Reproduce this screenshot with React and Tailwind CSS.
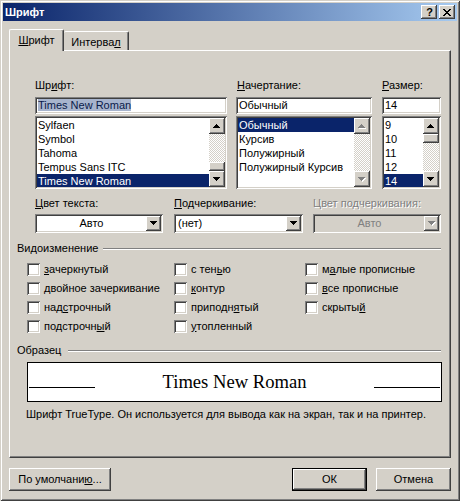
import React from "react";

const raised =
  "shadow-[inset_-1px_-1px_0_#404040,inset_1px_1px_0_#ffffff,inset_-2px_-2px_0_#808080,inset_2px_2px_0_#d4d0c8]";
const sunken =
  "shadow-[inset_1px_1px_0_#808080,inset_-1px_-1px_0_#ffffff,inset_2px_2px_0_#404040,inset_-2px_-2px_0_#d4d0c8]";

function UpArrow({ disabled }) {
  return (
    <svg width="8" height="5" viewBox="0 0 8 5" shapeRendering="crispEdges">
      {disabled && (
        <path d="M4 1h1v1H4z M3 2h3v1H3z M2 3h5v1H2z M1 4h7v1H1z" fill="#ffffff" />
      )}
      <path
        d="M3 0h1v1H3z M2 1h3v1H2z M1 2h5v1H1z M0 3h7v1H0z"
        fill={disabled ? "#808080" : "#000000"}
      />
    </svg>
  );
}

function DownArrow({ disabled }) {
  return (
    <svg width="8" height="5" viewBox="0 0 8 5" shapeRendering="crispEdges">
      {disabled && (
        <path d="M1 1h7v1H1z M2 2h5v1H2z M3 3h3v1H3z M4 4h1v1H4z" fill="#ffffff" />
      )}
      <path
        d="M0 0h7v1H0z M1 1h5v1H1z M2 2h3v1H2z M3 3h1v1H3z"
        fill={disabled ? "#808080" : "#000000"}
      />
    </svg>
  );
}

function Scrollbar({ thumb, disabled }) {
  return (
    <div className="flex flex-col w-[16px] h-full shrink-0">
      <div className={`h-[16px] bg-[#d4d0c8] ${raised} flex items-center justify-center`}>
        <UpArrow disabled={disabled} />
      </div>
      <div
        className={`flex-1 flex flex-col bg-[image:repeating-conic-gradient(#d4d0c8_0%_25%,#ffffff_0%_50%)] bg-[length:2px_2px] ${
          thumb === "bottom" ? "justify-end" : "justify-start"
        }`}
      >
        {thumb && <div className={`h-[9px] bg-[#d4d0c8] ${raised}`} />}
      </div>
      <div className={`h-[16px] bg-[#d4d0c8] ${raised} flex items-center justify-center`}>
        <DownArrow disabled={disabled} />
      </div>
    </div>
  );
}

function ListBox({ items, selected, thumb, disabled }) {
  return (
    <div className={`${sunken} bg-white p-[2px] h-[73px] flex`}>
      <div className="flex-1 flex flex-col overflow-hidden">
        {items.map((it) => (
          <div
            key={it}
            className={`h-[14px] shrink-0 leading-[14px] pl-[1px] whitespace-nowrap ${
              it === selected ? "bg-[#0a246a] text-white" : ""
            }`}
          >
            {it}
          </div>
        ))}
      </div>
      <Scrollbar thumb={thumb} disabled={disabled} />
    </div>
  );
}

function TextBox({ children }) {
  return (
    <div className={`${sunken} bg-white p-[2px] h-[17px] flex items-center`}>
      <div className="pl-[1px] leading-[13px] whitespace-nowrap">{children}</div>
    </div>
  );
}

function Combo({ value, center, disabled }) {
  return (
    <div
      className={`${sunken} ${disabled ? "bg-[#d4d0c8]" : "bg-white"} p-[2px] h-[19px] flex`}
    >
      <div
        className={`flex-1 leading-[15px] whitespace-nowrap ${
          center ? "text-center" : "pl-[2px]"
        } ${disabled ? "text-[#808080]" : ""}`}
      >
        {value}
      </div>
      <div className={`w-[15px] h-[15px] bg-[#d4d0c8] ${raised} flex items-center justify-center`}>
        <DownArrow disabled={disabled} />
      </div>
    </div>
  );
}

function Check({ children }) {
  return (
    <div className="flex items-center h-[19px] gap-[4px] whitespace-nowrap">
      <div className={`w-[13px] h-[13px] bg-white ${sunken} shrink-0`} />
      <span className="leading-[13px]">{children}</span>
    </div>
  );
}

function GroupHeader({ label, gap }) {
  return (
    <div className={`flex items-center h-[13px] ${gap}`}>
      <span className="leading-[13px] whitespace-nowrap">{label}</span>
      <div className="flex-1 h-[2px] border-t border-t-[#808080] border-b border-b-white" />
    </div>
  );
}

function Button({ children, width, isDefault }) {
  return (
    <div
      className={`${width} h-[23px] bg-[#d4d0c8] flex items-center justify-center leading-[13px] ${
        isDefault ? "border border-black" : ""
      } ${raised}`}
    >
      {children}
    </div>
  );
}

export default function App() {
  return (
    <div className="w-[460px] h-[501px] bg-[#d4d0c8] p-[3px] flex flex-col font-['Liberation_Sans',Arial,sans-serif] text-[11px] text-black shadow-[inset_1px_1px_0_#d4d0c8,inset_-1px_-1px_0_#404040,inset_2px_2px_0_#ffffff,inset_-2px_-2px_0_#808080] select-none">
      {/* Title bar */}
      <div className="h-[18px] flex items-center bg-[linear-gradient(to_right,#0a246a,#a6caf0)] pl-[2px] pr-[2px]">
        <span className="flex-1 text-white font-bold leading-[13px]">Шрифт</span>
        <div className="flex gap-[2px]">
          <div className={`w-[16px] h-[14px] bg-[#d4d0c8] ${raised} flex items-center justify-center`}>
            <span className="font-bold text-[11px] leading-[11px] pl-[1px]">?</span>
          </div>
          <div className={`w-[16px] h-[14px] bg-[#d4d0c8] ${raised} flex items-center justify-center`}>
            <svg width="8" height="7" viewBox="0 0 8 7" shapeRendering="crispEdges">
              <path
                d="M0 0h2v1H0z M6 0h2v1H6z M1 1h2v1H1z M5 1h2v1H5z M2 2h4v1H2z M3 3h2v1H3z M2 4h4v1H2z M1 5h2v1H1z M5 5h2v1H5z M0 6h2v1H0z M6 6h2v1H6z"
                fill="#000"
              />
            </svg>
          </div>
        </div>
      </div>

      {/* Tabs */}
      <div className="flex items-end pl-[6px] pt-[8px]">
        <div className="relative z-10 -mb-px w-[55px] h-[22px] bg-[#d4d0c8] border-l border-t border-white border-r border-r-[#404040] rounded-t-[2px] shadow-[inset_-1px_0_0_#808080] flex justify-center pt-[4px] leading-[13px]">
          <span>
            <u>Ш</u>рифт
          </span>
        </div>
        <div className="w-[65px] h-[19px] bg-[#d4d0c8] border-t border-white border-r border-r-[#404040] rounded-t-[2px] shadow-[inset_-1px_0_0_#808080] flex justify-center pt-[4px] leading-[13px]">
          <span>
            Интерва<u>л</u>
          </span>
        </div>
      </div>

      {/* Panel */}
      <div className="mx-[6px] h-[408px] border border-t-white border-l-white border-r-[#404040] border-b-[#404040] shadow-[inset_-1px_-1px_0_#808080] flex flex-col">
        {/* Row 1 */}
        <div className="flex pt-[28px] pl-[25px]">
          <div className="w-[192px] flex flex-col">
            <div className="h-[13px] leading-[13px]">
              Шр<u>и</u>фт:
            </div>
            <div className="mt-[5px]">
              <TextBox>
                <span className="bg-[#a7b4cd] text-[#0a1a4a]">Times New Roman</span>
              </TextBox>
            </div>
            <div className="mt-[2px]">
              <ListBox
                items={["Sylfaen", "Symbol", "Tahoma", "Tempus Sans ITC", "Times New Roman"]}
                selected="Times New Roman"
                thumb="bottom"
              />
            </div>
          </div>
          <div className="w-[136px] ml-[9px] flex flex-col">
            <div className="h-[13px] leading-[13px] pl-[1px]">
              <u>Н</u>ачертание:
            </div>
            <div className="mt-[5px]">
              <TextBox>Обычный</TextBox>
            </div>
            <div className="mt-[2px]">
              <ListBox
                items={["Обычный", "Курсив", "Полужирный", "Полужирный Курсив"]}
                selected="Обычный"
                disabled
              />
            </div>
          </div>
          <div className="w-[59px] ml-[10px] flex flex-col">
            <div className="h-[13px] leading-[13px]">
              <u>Р</u>азмер:
            </div>
            <div className="mt-[5px]">
              <TextBox>14</TextBox>
            </div>
            <div className="mt-[2px]">
              <ListBox items={["9", "10", "11", "12", "14"]} selected="14" thumb="top" />
            </div>
          </div>
        </div>

        {/* Row 2 */}
        <div className="flex mt-[8px] pl-[25px]">
          <div className="w-[128px] flex flex-col">
            <div className="h-[13px] leading-[13px]">
              <u>Ц</u>вет текста:
            </div>
            <div className="mt-[4px]">
              <Combo value="Авто" center />
            </div>
          </div>
          <div className="w-[129px] ml-[11px] flex flex-col">
            <div className="h-[13px] leading-[13px]">
              <u>П</u>одчеркивание:
            </div>
            <div className="mt-[4px]">
              <Combo value="(нет)" />
            </div>
          </div>
          <div className="w-[128px] ml-[10px] flex flex-col">
            <div className="h-[13px] leading-[13px] text-[#808080] [text-shadow:1px_1px_0_#ffffff]">
              Цвет подчеркивания:
            </div>
            <div className="mt-[4px]">
              <Combo value="Авто" center disabled />
            </div>
          </div>
        </div>

        {/* Видоизменение */}
        <div className="mt-[9px] ml-[7px] mr-[9px] flex flex-col">
          <GroupHeader label="Видоизменение" gap="gap-[5px]" />
          <div className="flex mt-[5px] pl-[10px]">
            <div className="w-[147px] flex flex-col">
              <Check>
                <u>з</u>ачеркнутый
              </Check>
              <Check>
                <u>д</u>войное зачеркивание
              </Check>
              <Check>
                над<u>с</u>трочный
              </Check>
              <Check>
                подстрочн<u>ы</u>й
              </Check>
            </div>
            <div className="w-[131px] flex flex-col">
              <Check>
                с тен<u>ь</u>ю
              </Check>
              <Check>
                <u>к</u>онтур
              </Check>
              <Check>
                приподн<u>я</u>тый
              </Check>
              <Check>
                <u>у</u>топленный
              </Check>
            </div>
            <div className="flex-1 flex flex-col">
              <Check>
                м<u>а</u>лые прописные
              </Check>
              <Check>
                <u>в</u>се прописные
              </Check>
              <Check>
                скрыты<u>й</u>
              </Check>
            </div>
          </div>

          {/* Образец */}
          <div className="mt-[8px]">
            <GroupHeader label="Образец" gap="gap-[7px]" />
          </div>
          <div className="mt-[5px] ml-[10px] w-[415px] h-[40px] bg-white border border-black flex items-end px-[1px] pb-[13px]">
            <div className="w-[66px] h-px bg-black" />
            <div className="flex-1 text-center font-['Liberation_Serif','Times_New_Roman',serif] text-[18.6px] leading-none -mb-[4px]">
              Times New Roman
            </div>
            <div className="w-[66px] h-px bg-black" />
          </div>
          <div className="mt-[6px] ml-[9px] h-[13px] leading-[13px] whitespace-nowrap">
            Шрифт TrueType. Он используется для вывода как на экран, так и на принтер.
          </div>
        </div>
      </div>

      {/* Buttons */}
      <div className="flex mx-[6px] mt-[10px]">
        <Button width="w-[102px]">
          <span>
            По умолчани<u>ю</u>...
          </span>
        </Button>
        <div className="flex-1" />
        <Button width="w-[75px]" isDefault>
          ОК
        </Button>
        <div className="w-[9px]" />
        <Button width="w-[75px]">Отмена</Button>
      </div>
    </div>
  );
}
